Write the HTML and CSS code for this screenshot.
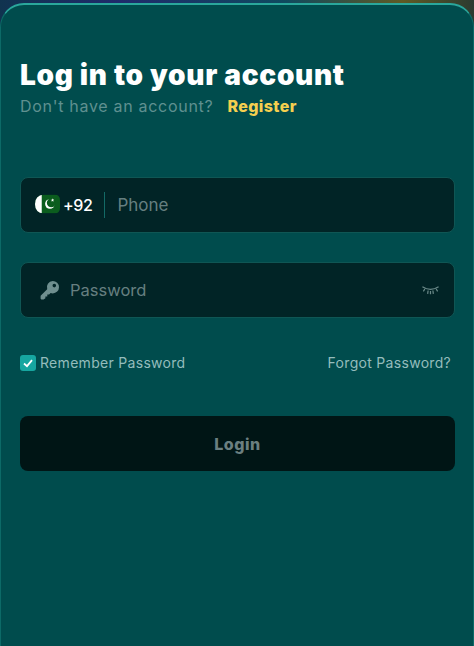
FILE: index.html
```html
<!DOCTYPE html>
<html lang="en">
<head>
<meta charset="utf-8">
<title>Log in</title>
<link rel="stylesheet" href="styles.css">
</head>
<body>
<main class="card">
  <h1 class="title">Log in to your account</h1>
  <p class="sub"><span>Don't have an account?</span><a class="register" href="#">Register</a></p>
  <form class="form">
    <div class="field">
      <svg class="flag" viewBox="0 0 26 20" aria-hidden="true">
        <defs><clipPath id="fc"><path d="M9 0H20Q26 0 26 6V14Q26 20 20 20H9Q0 19 0 10Q0 1 9 0Z"/></clipPath></defs>
        <g clip-path="url(#fc)">
          <rect width="26" height="20" fill="#0b5d1e"/>
          <rect width="7" height="20" fill="#fff"/>
          <circle cx="15.500" cy="10" r="5" fill="#fff"/>
          <circle cx="17" cy="8.800" r="4.700" fill="#0b5d1e"/>
          <path d="M19 5.500l.5 1.500 1.500-.2-1 1.200.6 1.400-1.400-.7-1.100 1 .2-1.500-1.300-.8 1.500-.2z" fill="#fff" transform="translate(1 -1) scale(.9)"/>
        </g>
      </svg>
      <span class="code">+92</span>
      <span class="divider"></span>
      <span class="placeholder">Phone</span>
    </div>
    <div class="field">
      <svg class="key" viewBox="0 0 20 20" aria-hidden="true">
        <path d="M12.800 1a6.200 6.200 0 0 1 0 12.400c-.8 0-1.500-.1-2.200-.4l-1.500 1.600H7.300v1.900H5.400V18.300L3.600 19.400H1.400A.8.800 0 0 1 .6 18.600V16.300a1 1 0 0 1 .3-.7l6.300-6.300a6.200 6.200 0 0 1 5.600-8.300ZM14.300 3.800a1.800 1.800 0 1 0 0 3.600a1.800 1.800 0 0 0 0-3.600Z" fill="#6f8f8f" fill-rule="evenodd"/>
      </svg>
      <span class="placeholder pass">Password</span>
      <svg class="eye" viewBox="0 0 20 12" aria-hidden="true">
        <path d="M1.500 2.500Q10 8 18.500 2.500M4 5L2.500 7.500M7.500 6.500L7 10M12.500 6.500L13 10M16 5L17.500 7.500M10 7V10.500" fill="none" stroke="#6b8a89" stroke-width="1.300"/>
      </svg>
    </div>
    <div class="options">
      <label class="remember">
        <span class="check">
          <svg viewBox="0 0 16 16" aria-hidden="true"><path d="M4 8.500L7 11.200L12 5.200" fill="none" stroke="#fff" stroke-width="1.800"/></svg>
        </span>
        <span>Remember Password</span>
      </label>
      <a class="forgot" href="#">Forgot Password?</a>
    </div>
    <button class="login" type="button">Login</button>
  </form>
</main>
</body>
</html>
```

FILE: styles.css
```css
* {
  box-sizing: border-box;
}

html,
body {
  margin: 0;
  height: 100%;
  overflow: hidden;
}

body {
  padding-top: 3px;
  background: linear-gradient(90deg, #10334f 0%, #1f2a6b 25%, #0f4a5f 60%, #5f5a24 85%, #2b3a30 100%);
  font-family: Inter, "Noto Sans", sans-serif;
}

.card {
  height: 643px;
  padding: 53px 19px 0 19px;
  background: #004c4d;
  border-top: 2px solid #2aa79c;
  border-left: 1px solid #0c6a67;
  border-right: 1px solid #0c6a67;
  border-radius: 24px 24px 0 0;
}

.title {
  margin: 0 0 3px;
  color: #fff;
  font-size: 28px;
  line-height: 34px;
  font-weight: 900;
  letter-spacing: .7px;
}

.sub {
  display: flex;
  gap: 14px;
  margin: 0;
  color: #5f9090;
  font-size: 16px;
  line-height: 22px;
  letter-spacing: .7px;
}

.register {
  color: #f5cf4f;
  font-weight: 800;
  letter-spacing: .4px;
  text-decoration: none;
}

.form {
  margin-top: 60px;
}

.field {
  display: flex;
  align-items: center;
  width: 435px;
  height: 56px;
  margin-bottom: 29px;
  padding: 0 14px;
  background: #012426;
  border: 1px solid #0f5654;
  border-radius: 8px;
  font-size: 17px;
}

.flag {
  width: 25px;
  height: 20px;
  margin-bottom: 2px;
}

.code {
  margin-left: 3px;
  color: #fff;
  font-size: 16px;
  font-weight: 500;
  letter-spacing: -.4px;
}

.divider {
  width: 1px;
  height: 26px;
  margin: 0 12px;
  background: #136a66;
}

.placeholder {
  color: #667f80;
}

.pass {
  font-size: 16.500px;
}

.key {
  width: 20px;
  height: 20px;
  margin: 0 10px 0 5px;
}

.eye {
  width: 19px;
  height: 12px;
  margin: 0 0 0 auto;
}

.options {
  display: flex;
  justify-content: space-between;
  align-items: center;
  width: 431px;
  margin-top: 35px;
  font-size: 14px;
  line-height: 20px;
  color: #94bcbc;
  letter-spacing: .3px;
}

.remember {
  display: flex;
  align-items: center;
  gap: 4px;
}

.check {
  display: flex;
  width: 16px;
  height: 16px;
  background: #16a6a0;
  border-radius: 3px;
}

.check svg {
  width: 16px;
  height: 16px;
}

.forgot {
  color: #94bcbc;
  text-decoration: none;
}

.login {
  display: block;
  width: 435px;
  height: 55px;
  margin-top: 43px;
  background: #001515;
  border: 0;
  border-radius: 8px;
  color: #6b7f80;
  font: 800 16px Inter, "Noto Sans", sans-serif;
  letter-spacing: .5px;
}
```
